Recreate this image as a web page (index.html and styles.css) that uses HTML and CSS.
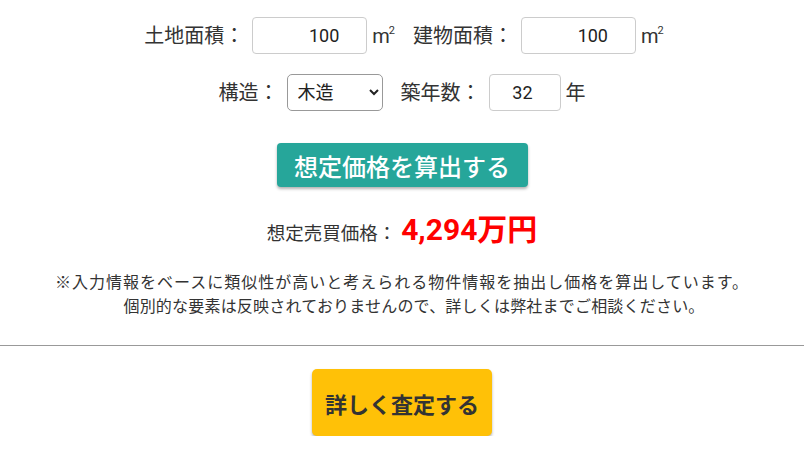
FILE: index.html
```html
<!DOCTYPE html>
<html lang="ja">
<head>
<meta charset="utf-8">
<link rel="stylesheet" href="styles.css">
</head>
<body>
<div class="page">
  <div class="row row-first">
    <div class="group">
      <span class="label">土地面積：</span>
      <input class="field field-area" type="text" value="100">
      <span class="unit">m<sup>2</sup></span>
    </div>
    <div class="group">
      <span class="label">建物面積：</span>
      <input class="field field-area" type="text" value="100">
      <span class="unit">m<sup>2</sup></span>
    </div>
  </div>
  <div class="row row-second">
    <div class="group">
      <span class="label">構造：</span>
      <select class="select">
        <option>木造</option>
        <option>鉄骨造</option>
        <option>RC造</option>
      </select>
    </div>
    <div class="group">
      <span class="label">築年数：</span>
      <input class="field field-age" type="text" value="32">
      <span class="unit">年</span>
    </div>
  </div>
  <div class="action">
    <button class="btn-calc">想定価格を算出する</button>
  </div>
  <div class="result">
    <span class="result-label">想定売買価格：</span><span class="result-value">4,294万円</span>
  </div>
  <p class="note"><span class="note-line note-line-1">※入力情報をベースに類似性が高いと考えられる物件情報を抽出し価格を算出しています。</span><span class="note-line note-line-2">個別的な要素は反映されておりませんので、詳しくは弊社までご相談ください。</span></p>
  <hr class="divider">
  <div class="action">
    <button class="btn-detail">詳しく査定する</button>
  </div>
</div>
</body>
</html>
```

FILE: styles.css
```css
* { box-sizing: border-box; }
html, body {
  margin: 0;
  padding: 0;
  background: #fff;
}
body {
  font-family: Roboto, "Noto Sans CJK JP", sans-serif;
  color: #333;
}
.page {
  padding-top: 17px;
  display: flex;
  flex-direction: column;
  align-items: stretch;
}
.row {
  display: flex;
  justify-content: center;
  align-items: center;
  gap: 18px;
  height: 37px;
}
.row-first {
  padding-left: 4px;
}
.row-second {
  margin-top: 20px;
}
.group {
  display: flex;
  align-items: center;
  gap: 5px;
}
.label {
  margin-right: 3px;
}
.label, .unit {
  font-size: 20px;
  color: #333;
  line-height: 1;
}
.unit sup {
  font-size: 11px;
  vertical-align: 9px;
  margin-left: -1px;
}
.field {
  height: 37px;
  border: 1px solid #ccc;
  border-radius: 4px;
  font-family: Roboto, "Noto Sans CJK JP", sans-serif;
  font-size: 18px;
  color: #222;
  text-align: right;
  padding: 0 27px 0 8px;
  outline: none;
  background: #fff;
}
.field-area { width: 115px; }
.field-age { width: 72px; }
.select {
  width: 96px;
  height: 37px;
  border: 1px solid #999;
  border-radius: 5px;
  font-family: Roboto, "Noto Sans CJK JP", sans-serif;
  font-size: 18px;
  color: #222;
  padding: 0 6px;
  background: #fff;
}
.action {
  display: flex;
  justify-content: center;
}
.btn-calc {
  margin-top: 32px;
  width: 251px;
  height: 44px;
  border: none;
  border-radius: 4px;
  background: #26a69a;
  color: #fff;
  font-family: Roboto, "Noto Sans CJK JP", sans-serif;
  font-size: 24px;
  font-weight: 500;
  padding: 0;
  box-shadow: 0 2px 3px rgba(0,0,0,0.3);
}
.result {
  margin-top: 18px;
  height: 36px;
  display: flex;
  justify-content: center;
  align-items: baseline;
}
.result-label {
  font-size: 18.5px;
  color: #333;
}
.result-value {
  font-size: 30px;
  font-weight: 700;
  color: #f00;
  margin-left: 5px;
}
.note {
  margin: 30px 0 0;
  text-align: center;
  font-size: 16px;
  line-height: 24px;
  color: #333;
}
.note-line {
  display: block;
}
.note-line-1 { letter-spacing: 1px; }
.note-line-2 { letter-spacing: 0.2px; padding-left: 24px; }
.divider {
  margin: 26px 0 0;
  border: none;
  border-top: 1px solid #999;
  height: 0;
}
.btn-detail {
  margin-top: 23px;
  width: 180px;
  height: 67px;
  border: none;
  border-radius: 5px;
  background: #ffc107;
  color: #333;
  font-family: Roboto, "Noto Sans CJK JP", sans-serif;
  font-size: 22px;
  font-weight: 700;
  padding: 0;
  box-shadow: 0 2px 3px rgba(0,0,0,0.3);
}
```
